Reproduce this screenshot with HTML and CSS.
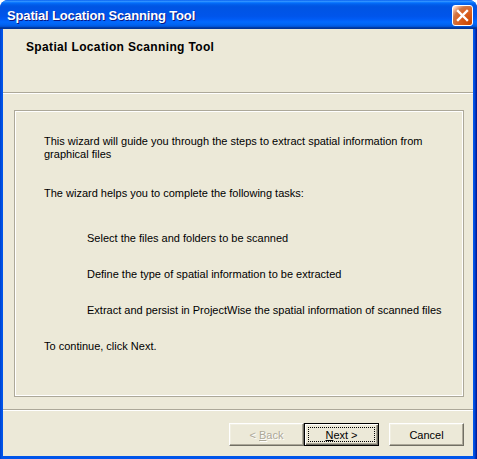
FILE: index.html
```html
<!DOCTYPE html>
<html>
<head>
<meta charset="utf-8">
<link rel="stylesheet" href="styles.css">
</head>
<body>
<div class="window">
  <div class="titlebar">
    <span class="title">Spatial Location Scanning Tool</span>
    <div class="close">
      <svg width="13" height="13" viewBox="0 0 13 13"><path d="M2 2 L11 11 M11 2 L2 11" stroke="#fff" stroke-width="2.4" stroke-linecap="square"/></svg>
    </div>
  </div>
  <div class="client">
    <div class="header"><span class="header-title">Spatial Location Scanning Tool</span></div>
    <div class="sep"></div>
    <div class="group">
      <p class="p1">This wizard will guide you through the steps to extract spatial information from graphical files</p>
      <p class="p2">The wizard helps you to complete the following tasks:</p>
      <p class="task t1">Select the files and folders to be scanned</p>
      <p class="task">Define the type of spatial information to be extracted</p>
      <p class="task">Extract and persist in ProjectWise the spatial information of scanned files</p>
      <p class="last">To continue, click Next.</p>
    </div>
    <div class="sep sep-bottom"></div>
    <div class="buttons">
      <button class="btn disabled"><span class="label">&lt; <u>B</u>ack</span></button>
      <button class="btn default"><span class="focus"><span class="label"><u>N</u>ext &gt;</span></span></button>
      <button class="btn cancel"><span class="label">Cancel</span></button>
    </div>
  </div>
</div>
</body>
</html>
```
FILE: styles.css
```css
html, body {
  margin: 0;
  padding: 0;
  background: #fff;
}
.window {
  width: 477px;
  height: 459px;
  box-sizing: border-box;
  background: linear-gradient(to right, #0041CC 0, #0055EA 2px, #0055EA 474px, #00138C 477px);
  border-radius: 8px 8px 0 0;
  display: flex;
  flex-direction: column;
  overflow: hidden;
}
.titlebar {
  height: 29px;
  flex: none;
  background: linear-gradient(to bottom, #0058EE 0%, #3593FF 4%, #288EFF 6%, #127DFF 8%, #036FFC 10%, #0262EE 14%, #0057E5 20%, #0054E3 24%, #0055EB 56%, #005BF5 66%, #026AFE 76%, #0062EF 86%, #0052D6 92%, #0040AB 94%, #003092 100%);
  display: flex;
  align-items: center;
  justify-content: space-between;
  padding: 0 4px 0 7px;
  box-sizing: border-box;
}
.title {
  font-family: "Liberation Sans", Arial, sans-serif;
  font-weight: bold;
  font-size: 13px;
  color: #fff;
  text-shadow: 1px 1px 0 #0A1883;
  letter-spacing: -0.15px;
  padding-top: 2px;
}
.close {
  width: 21px;
  height: 21px;
  box-sizing: border-box;
  border: 1px solid #fff;
  border-radius: 3px;
  background: radial-gradient(circle at 90% 90%, #CC4600 0%, #DC6527 55%, #CD7546 70%, #FFCCB2 90%, #fff 100%);
  display: flex;
  align-items: center;
  justify-content: center;
  margin-top: 2px;
}
.close svg { display: block; }
.client {
  flex: 1;
  margin: 0 4px 3px 3px;
  background: #ECE9D8;
  display: flex;
  flex-direction: column;
  font-family: "Liberation Sans", Arial, sans-serif;
  font-size: 11px;
  color: #000;
}
.header {
  height: 63px;
  flex: none;
  padding: 11px 0 0 23px;
  box-sizing: border-box;
}
.header-title {
  font-weight: bold;
  font-size: 12px;
  letter-spacing: 0.35px;
}
.sep {
  height: 1px;
  background: #ACA899;
  border-bottom: 1px solid #fff;
  flex: none;
}
.group {
  margin: 16px 9px 0 11px;
  height: 287px;
  box-sizing: border-box;
  border: 1px solid #ACA899;
  box-shadow: inset 1px 1px 0 #fff, inset -1px -1px 0 #fff;
  padding: 24px 20px 0 29px;
  flex: none;
}
.group p {
  margin: 0;
  line-height: 13px;
}
.p2 { margin-top: 26px !important; }
.task { margin-left: 43px !important; margin-top: 23px !important; }
.task.t1 { margin-top: 32px !important; }
.last { margin-top: 23px !important; }
.sep-bottom { margin-top: 12px; }
.buttons {
  display: flex;
  justify-content: flex-end;
  padding: 12px 9px 0 0;
}
.btn {
  width: 75px;
  height: 23px;
  box-sizing: border-box;
  margin: 0;
  padding: 0;
  font-family: "Liberation Sans", Arial, sans-serif;
  font-size: 11px;
  color: #000;
  background: #ECE9D8;
  border: 1px solid;
  border-color: #fff #716F64 #716F64 #fff;
  box-shadow: inset -1px -1px 0 #ACA899, inset 1px 1px 0 #F1EFE2;
  display: flex;
  align-items: center;
  justify-content: center;
}
.label { white-space: pre; }
.btn.disabled {
  color: #ACA899;
  text-shadow: 1px 1px 0 #fff;
}
.btn.default {
  border: 1px solid #000;
  box-shadow: inset 1px 1px 0 #fff, inset -1px -1px 0 #716F64, inset -2px -2px 0 #ACA899;
  padding: 3px;
}
.focus {
  flex: 1;
  align-self: stretch;
  border: 1px dotted #000;
  display: flex;
  align-items: center;
  justify-content: center;
}
.btn.cancel { margin-left: 10px; }
```
